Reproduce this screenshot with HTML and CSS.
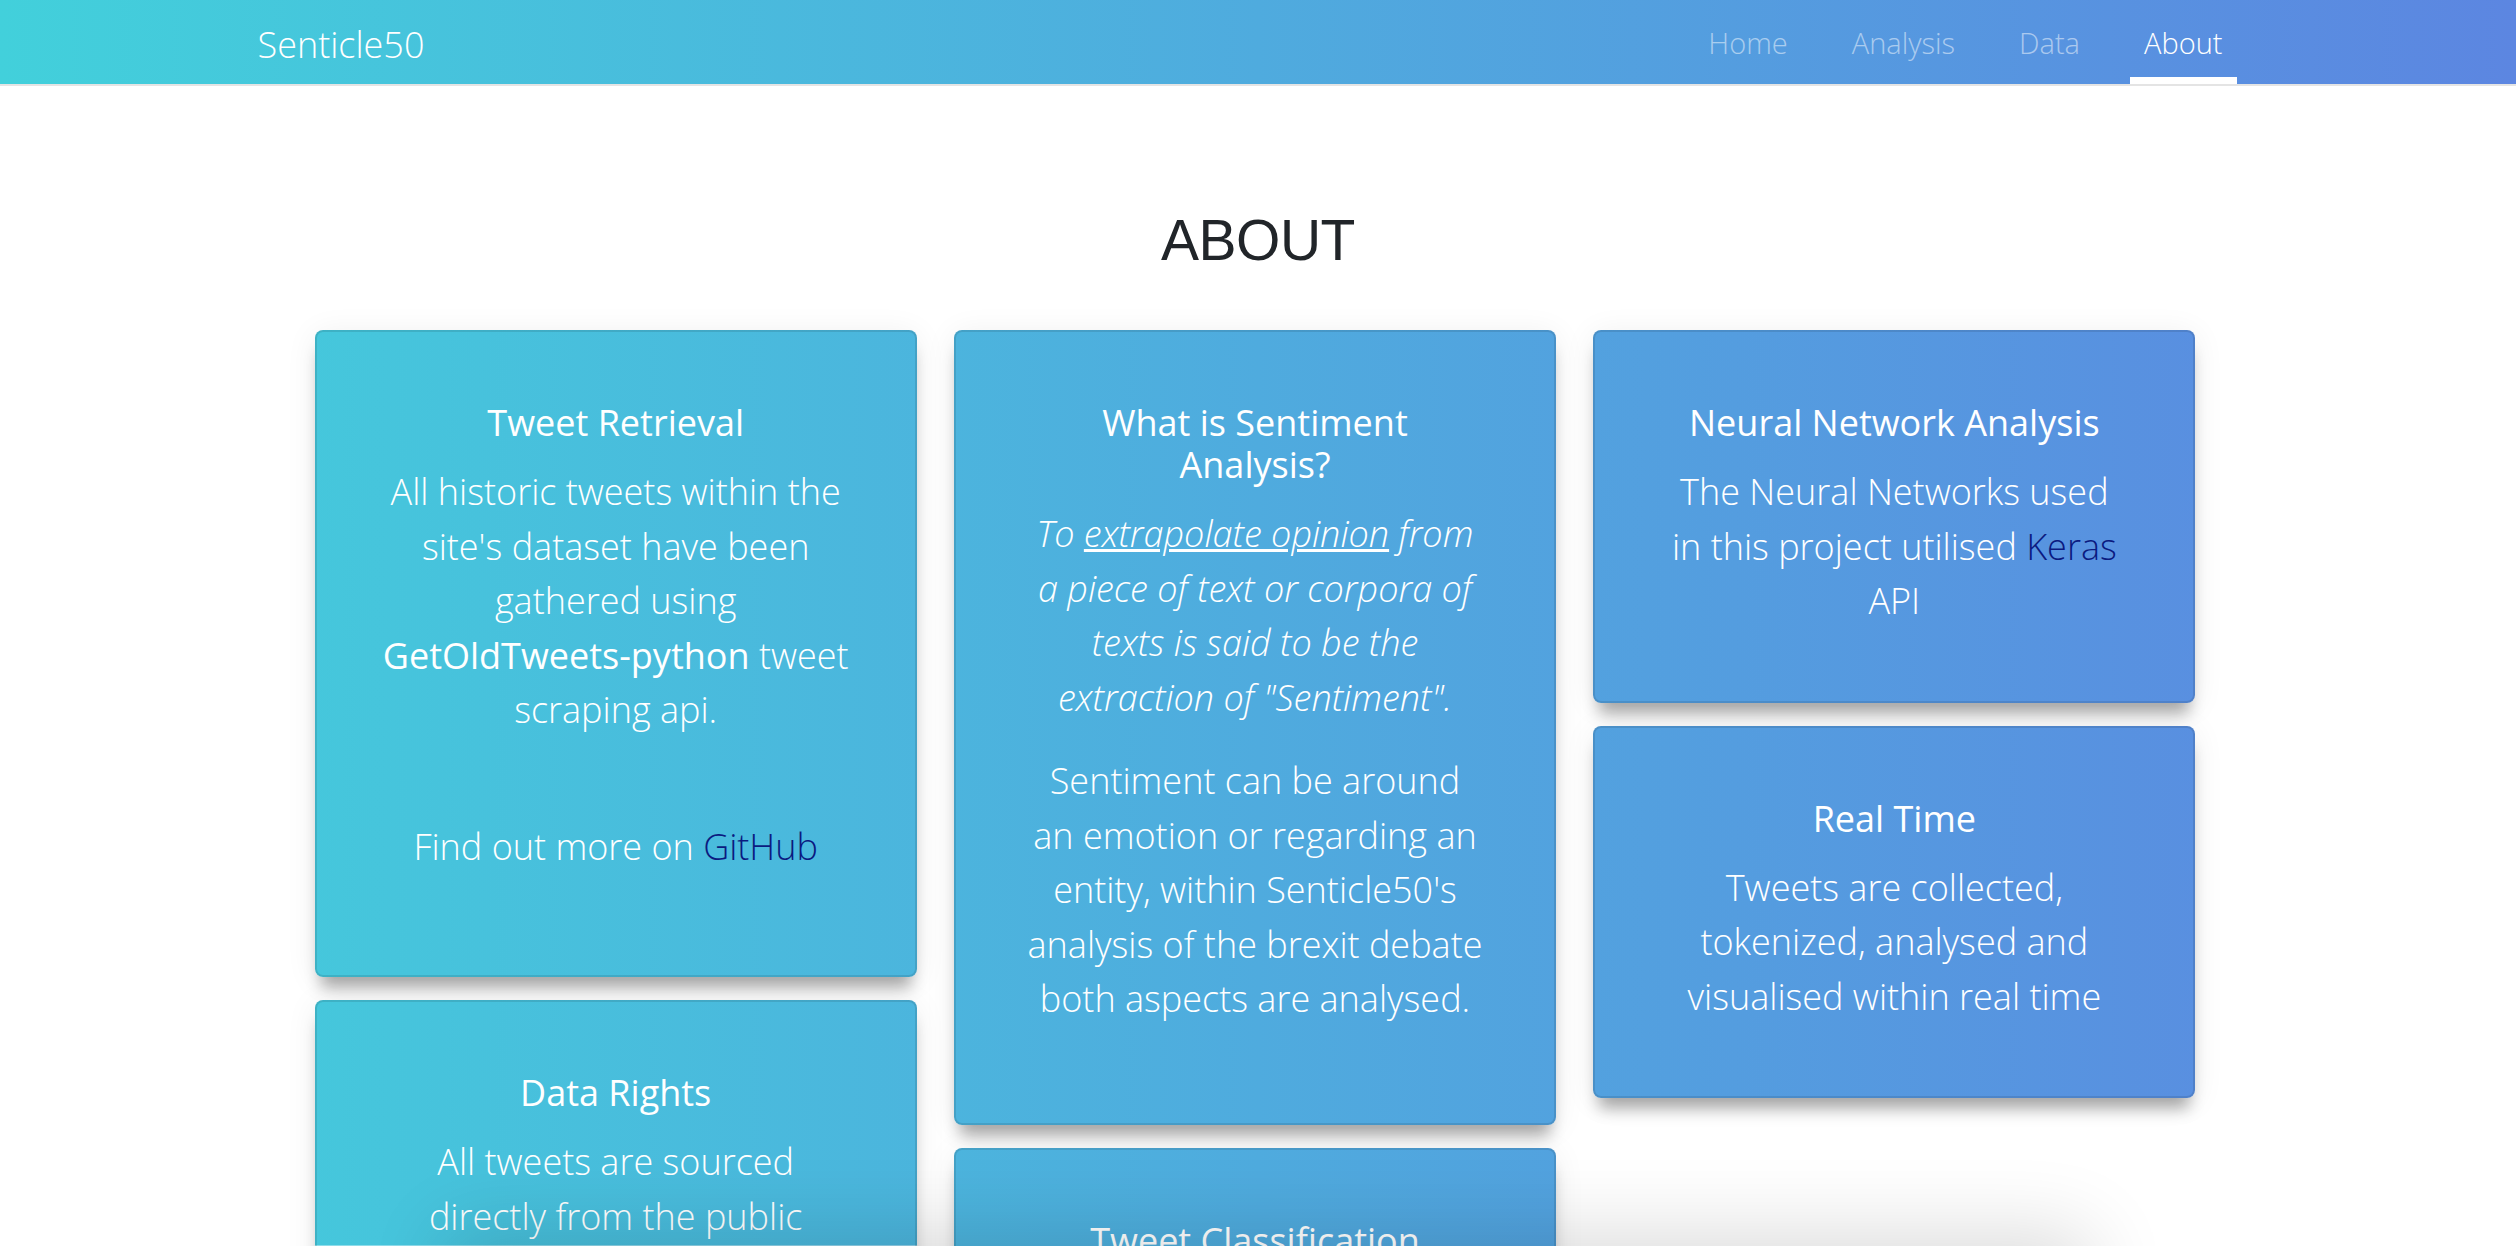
FILE: index.html
```html
<!DOCTYPE html>
<html lang="en">
<head>
<meta charset="utf-8">
<title>Senticle50 - About</title>
<link rel="stylesheet" href="styles.css">
</head>
<body>
<header class="navbar">
  <div class="nav-inner">
    <a class="brand" href="#">Senticle50</a>
    <nav class="nav-links">
      <a href="#">Home</a>
      <a href="#">Analysis</a>
      <a href="#">Data</a>
      <a href="#" class="active">About</a>
    </nav>
  </div>
</header>

<main class="page">
  <h1 class="page-title">ABOUT</h1>
  <div class="card-grid">
    <div class="card-col">
      <section class="card">
        <h5 class="card-title">Tweet Retrieval</h5>
        <p>All historic tweets within the<br>site's dataset have been<br>gathered using<br><strong>GetOldTweets-python</strong> tweet<br>scraping api.</p>
        <p class="more">Find out more on <a href="#">GitHub</a></p>
      </section>
      <section class="card">
        <h5 class="card-title">Data Rights</h5>
        <p>All tweets are sourced<br>directly from the public<br>Twitter API and contain<br>no private information.</p>
      </section>
    </div>
    <div class="card-col">
      <section class="card lean">
        <h5 class="card-title">What is Sentiment<br>Analysis?</h5>
        <p class="quote">To <u>extrapolate opinion</u> from<br>a piece of text or corpora of<br>texts is said to be the<br>extraction of "Sentiment".</p>
        <p>Sentiment can be around<br>an emotion or regarding an<br>entity, within Senticle50's<br>analysis of the brexit debate<br>both aspects are analysed.</p>
      </section>
      <section class="card">
        <h5 class="card-title">Tweet Classification</h5>
        <p>Each tweet is classified<br>as positive, negative or<br>neutral by the model.</p>
      </section>
    </div>
    <div class="card-col">
      <section class="card compact">
        <h5 class="card-title">Neural Network Analysis</h5>
        <p>The Neural Networks used<br>in this project utilised <a href="#">Keras</a><br>API</p>
      </section>
      <section class="card compact">
        <h5 class="card-title">Real Time</h5>
        <p>Tweets are collected,<br>tokenized, analysed and<br>visualised within real time</p>
      </section>
    </div>
  </div>
</main>
<div class="bottom-glow"></div>
</body>
</html>
```
FILE: styles.css
```css
html, body {
  margin: 0;
  padding: 0;
}

body {
  font-family: "Open Sans", "Noto Sans", sans-serif;
  background: #ffffff;
  color: #212529;
}

/* ---------- navbar ---------- */
.navbar {
  height: 84px;
  border-bottom: 2px solid #e4e4e4;
  background: linear-gradient(to right, #42d0db, #5c86e1) fixed;
}

.nav-inner {
  max-width: 1997px;
  height: 100%;
  margin: 0 auto;
  padding-right: 4px;
  display: flex;
  align-items: center;
  justify-content: space-between;
}

.brand {
  color: #ffffff;
  font-size: 36px;
  font-weight: 300;
  line-height: 54px;
  margin-top: 6px;
  text-decoration: none;
}

.nav-links {
  display: flex;
  align-self: stretch;
}

.nav-links a {
  position: relative;
  display: flex;
  align-items: center;
  padding: 0 32px;
  font-size: 29px;
  font-weight: 300;
  color: rgba(255, 255, 255, 0.5);
  text-decoration: none;
}

.nav-links a.active {
  color: #ffffff;
}

.nav-links a.active::after {
  content: "";
  position: absolute;
  left: 18px;
  right: 18px;
  bottom: 0;
  height: 7px;
  background: #ffffff;
}

/* ---------- page ---------- */
.page-title {
  margin: 120px 0 56px;
  text-align: center;
  font-family: "Liberation Sans", Arial, sans-serif;
  font-weight: 400;
  font-size: 57px;
  line-height: 1.2;
  letter-spacing: -0.5px;
  color: #212529;
}

.card-grid {
  width: 1881px;
  margin: 0 auto;
  padding-right: 6px;
  display: grid;
  grid-template-columns: repeat(3, 1fr);
  column-gap: 37px;
  align-items: start;
}

.card-col {
  display: flex;
  flex-direction: column;
}

.card {
  background: linear-gradient(to right, #42d0db, #5c86e1) fixed;
  border: 2px solid rgba(0, 0, 0, 0.1);
  border-radius: 8px;
  padding: 70px 40px 69px;
  margin-bottom: 23px;
  color: #ffffff;
  text-align: center;
  box-shadow: 0 16px 16px -6px rgba(0, 0, 0, 0.33), 0 4px 32px rgba(0, 0, 0, 0.07);
}

.card-title {
  margin: 0 0 21px;
  font-size: 36px;
  font-weight: 500;
  line-height: 42px;
}

.card p {
  margin: 0 0 32px;
  font-size: 36px;
  font-weight: 300;
  line-height: 54.5px;
}

.card p strong {
  font-weight: 400;
}

.card p.quote {
  font-style: italic;
}

.card p.more {
  padding-top: 50px;
}

.card a {
  color: #0b1a80;
  text-decoration: none;
}

.card.lean {
  padding-bottom: 64px;
}

.card.lean p.quote {
  margin-top: 2px;
  margin-bottom: 29px;
}

.card.compact {
  padding-bottom: 72px;
}

.card.compact p {
  margin-bottom: 0;
}

/* soft shade coming from below the fold */
.bottom-glow {
  position: fixed;
  left: 460px;
  right: 440px;
  top: 100%;
  height: 200px;
  box-shadow: 0 0 80px 14px rgba(0, 0, 0, 0.14);
  z-index: 10;
}
```
